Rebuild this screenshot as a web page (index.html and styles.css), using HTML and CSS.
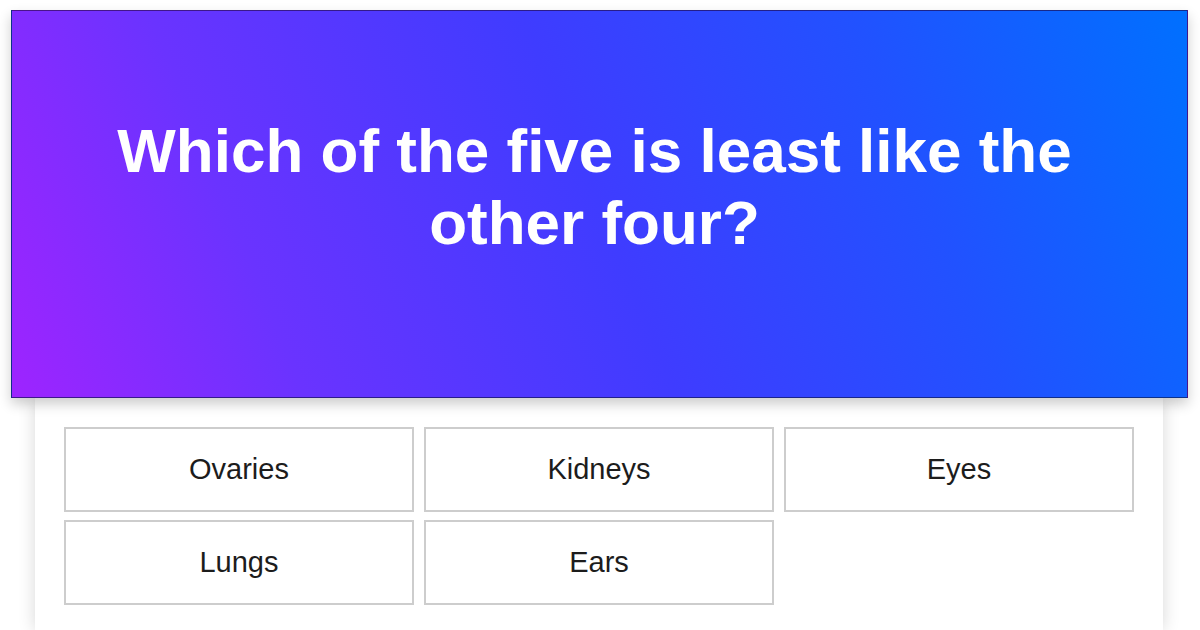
FILE: index.html
```html
<!DOCTYPE html>
<html lang="en">
<head>
<meta charset="utf-8">
<title>Quiz</title>
<link rel="stylesheet" href="styles.css">
</head>
<body>
<div class="page">
  <header class="banner">
    <h1 class="question">Which of the five is least like the other four?</h1>
  </header>
  <section class="card">
    <div class="options">
      <div class="option">Ovaries</div>
      <div class="option">Kidneys</div>
      <div class="option">Eyes</div>
      <div class="option">Lungs</div>
      <div class="option">Ears</div>
    </div>
  </section>
</div>
</body>
</html>
```
FILE: styles.css
```css
html, body {
  margin: 0;
  padding: 0;
  background: #ffffff;
  font-family: "Liberation Sans", Arial, sans-serif;
  overflow: hidden;
}
.page {
  width: 1200px;
  height: 630px;
  padding-top: 10px;
  box-sizing: border-box;
  display: flex;
  flex-direction: column;
}
.banner {
  position: relative;
  z-index: 2;
  margin-left: 11px;
  width: 1177px;
  height: 388px;
  box-sizing: border-box;
  border: 1px solid rgba(20, 10, 60, 0.6);
  background: linear-gradient(68deg, #9e24ff 0%, #6a33ff 22%, #3f3cff 50%, #2152ff 75%, #0070ff 100%);
  box-shadow: 0 6px 12px rgba(0, 0, 0, 0.2);
  padding: 104px 100px 0 90px;
}
.question {
  margin: 0;
  color: #ffffff;
  font-weight: 700;
  font-size: 62px;
  line-height: 72px;
  text-align: center;
}
.card {
  margin-left: 35px;
  width: 1128px;
  flex: 1;
  background: #ffffff;
  box-shadow: 0 0 16px rgba(0, 0, 0, 0.16);
  padding: 29px 29px 0 29px;
  box-sizing: border-box;
}
.options {
  display: grid;
  grid-template-columns: repeat(3, 350px);
  grid-auto-rows: 85px;
  column-gap: 10px;
  row-gap: 8px;
}
.option {
  box-sizing: border-box;
  border: 2px solid #cdcdcd;
  display: flex;
  align-items: center;
  justify-content: center;
  font-size: 29px;
  color: #1c1c1c;
}
```
